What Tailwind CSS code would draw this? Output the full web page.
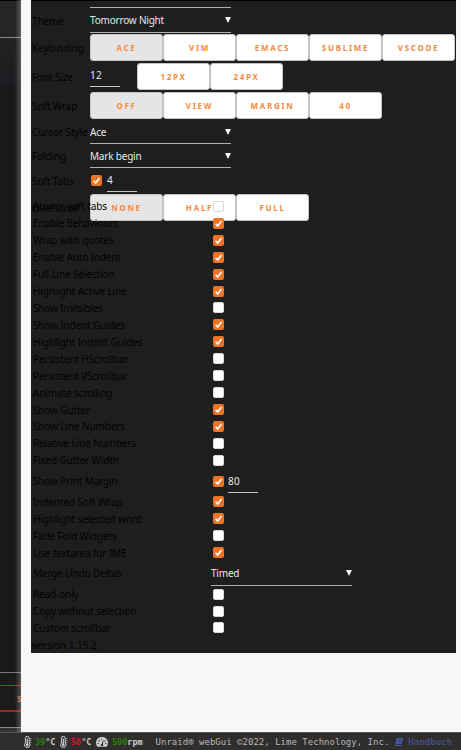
<!DOCTYPE html>
<html lang="de">
<head>
    <meta charset="UTF-8">
    <meta name="viewport" content="width=device-width, initial-scale=1.0">
    <title>Editor settings</title>
    <script src="https://cdn.jsdelivr.net/npm/@tailwindcss/browser@4"></script>
</head>
<body class="h-[750px] w-[461px] overflow-hidden bg-[#f7f7f7] font-['Noto_Sans',sans-serif] text-[10px] leading-none text-black">

    <svg class="hidden">
        <symbol id="check" viewBox="0 0 11 11">
            <path d="M2.6 5.8 4.7 8 8.5 2.9" fill="none" stroke="#fff" stroke-width="1.6"/>
        </symbol>
        <symbol id="thermo" viewBox="0 0 8 12">
            <path d="M1.4 7V2.2a1.9 1.9 0 0 1 3.8 0V7a2.7 2.7 0 1 1-3.8 0z" fill="none" stroke="#d0d0d0" stroke-width="1"/>
            <path d="M3.3 2.5v6" stroke="#d0d0d0" stroke-width="1.2"/>
            <circle cx="3.3" cy="9" r="1.4" fill="#d0d0d0"/>
            <path d="M6 2.5h1.5M6 4.5h1.5M6 6.5h1.5" stroke="#aaa" stroke-width=".8"/>
        </symbol>
    </svg>

    <div class="flex h-[732px]">
        <!-- Page behind the panel -->
        <div class="relative flex w-[21px] shrink-0 flex-col overflow-hidden bg-[#191a1c]">
            <div class="h-[37px] shrink-0 border-t border-black bg-[#252525]"></div>
            <div class="h-px shrink-0 bg-[#8a8a8a]"></div>
            <div class="h-[47px] shrink-0 bg-linear-to-b from-[#222] to-[#1c1d21]"></div>
            <div class="h-[587px] shrink-0"></div>
            <div class="h-px shrink-0 bg-[#777]"></div>
            <div class="h-3 shrink-0 bg-[#1c1b1b]"></div>
            <div class="h-px shrink-0 bg-[#c02828]"></div>
            <div class="h-6 shrink-0 bg-[#1c1b1b] pt-[9px] pl-[17px] text-[8px] font-bold text-[#b96a35]">S</div>
            <div class="h-[2px] shrink-0 bg-[#a32020]"></div>
            <div class="h-[15px] shrink-0 bg-[#1c1b1b]"></div>
            <div class="h-px shrink-0 bg-[#888]"></div>
            <div class="h-1 shrink-0 bg-[#333]"></div>
            <div class="absolute inset-y-0 right-0 w-[6px] bg-linear-to-r from-white/0 to-white/25"></div>
        </div>

        <div class="grow pl-[10px]">
            <div class="h-[653px] w-[425px] border-t border-black bg-[#1e1e1e] text-[#020202]">
                <div class="ml-[59px] h-[7px] w-[141px] border-b border-[#b0b0b0]"></div>
                <div id="top-rows"></div>
                <div id="list" class="relative -mt-[24px] pl-[2px]"></div>
                <div class="pt-1 pl-px tracking-[-.05px]">version 1.15.2</div>
            </div>
        </div>
    </div>

    <!-- Footer -->
    <div class="flex h-[18px] items-center border-t border-[#555] bg-[#2f2e2d] pt-px pl-6 font-['DejaVu_Sans_Mono',monospace] text-[9px] whitespace-nowrap text-[#b8b8b8]">
        <svg class="h-3 w-2"><use href="#thermo"/></svg>
        <span class="ml-[3px] w-[25px] text-[8.5px] font-bold text-[#ccc]"><span class="text-[#2d7d12]">39</span>°C</span>
        <svg class="h-3 w-2"><use href="#thermo"/></svg>
        <span class="ml-[3px] w-[25px] text-[8.5px] font-bold text-[#ccc]"><span class="text-[#e00a30]">56</span>°C</span>
        <svg class="h-[11px] w-3" viewBox="0 0 12 11">
            <path d="M1.4 9.8A6 6 0 1 1 10.6 9.8z" fill="#d0d0d0"/>
            <path d="M6 8 7.3 3.5" stroke="#2f2e2d" stroke-width="1"/>
            <g fill="#2f2e2d"><circle cx="6" cy="8" r="1.3"/><circle cx="2.2" cy="6.5" r=".7"/><circle cx="3.3" cy="3.7" r=".7"/><circle cx="5.5" cy="2.2" r=".6"/><circle cx="9" cy="4" r=".7"/><circle cx="9.8" cy="6.5" r=".7"/></g>
        </svg>
        <span class="ml-1 w-[43.5px] text-[8.5px] font-bold text-[#ccc]"><span class="text-[#2d7d12]">500</span>rpm</span>
        <span class="tracking-[.02px]">Unraid® webGui ©2022, Lime Technology, Inc.</span>
        <svg class="ml-[6px] h-2 w-2" viewBox="0 0 8 8">
            <path d="M2 0H8L6.8 5.8H1.4V7h5.4V8H1Q0 8 0 6.6z" fill="#4a5da8"/>
            <path d="M3.3 1.8h3M3 3.1h3" stroke="#2f2e2d" stroke-width=".6"/>
        </svg>
        <span class="ml-[5px] tracking-[.08px] text-[#4a5da8]">Handbuch</span>
    </div>

    <script>
        const select = (text) => `
            <div class="flex h-full w-[141px] items-center justify-between border-b border-[#b0b0b0] text-[#e8e8e8]">
                <span class="tracking-[-.2px]">${text}</span>
                <svg class="h-[6px] w-[6px]" viewBox="0 0 6 6"><path d="M0 0h6L3 6z" fill="#f2f2f2"/></svg>
            </div>`;

        const input = (text) => `
            <div class="flex h-[24px] w-[30px] items-center self-start border-b border-[#c8c8c8] pt-px tracking-[.3px] text-[#e8e8e8]">${text}</div>`;

        const check = (on) => on
            ? '<svg class="h-[11px] w-[11px] shrink-0 rounded-[2px] bg-[#ec7422]"><use href="#check"/></svg>'
            : '<span class="h-[11px] w-[11px] shrink-0 rounded-[2px] border border-[#d8d8d8] bg-white"></span>';

        const buttons = (names, active) => names.map((name, i) => `
            <button class="h-[27px] w-[73px] shrink-0 rounded-[3px] border border-[#c4c4c4] text-[8px] font-bold tracking-[1.7px] text-[#f58a3c] ${i === active ? 'bg-[#e5e5e5]' : 'bg-white'}">${name}</button>`).join('');

        const topRow = (height, label, content) => `
            <div class="flex ${height} items-center">
                <span class="w-[59px] shrink-0 pl-px tracking-[-.1px] whitespace-nowrap">${label}</span>${content}
            </div>`;

        document.getElementById('top-rows').innerHTML = [
            topRow('h-[25px]', 'Theme', select('Tomorrow Night')),
            topRow('h-[29px]', 'Keybinding', buttons(['ACE', 'VIM', 'EMACS', 'SUBLIME', 'VSCODE'], 0)),
            topRow('h-[29px]', 'Font Size', '<span class="flex h-[27px] w-[47px]">' + input('12') + '</span>' + buttons(['12PX', '24PX'], -1)),
            topRow('h-[29px]', 'Soft Wrap', buttons(['OFF', 'VIEW', 'MARGIN', '40'], 0)),
            topRow('h-[24px]', 'Cursor Style', select('Ace')),
            topRow('h-[24px]', 'Folding', select('Mark begin')),
            topRow('h-[25px]', 'Soft Tabs', '<span class="w-px"></span>' + check(true) + '<span class="w-[5px]"></span>' + input('4')),
            topRow('h-[29px]', 'Overscroll', buttons(['NONE', 'HALF', 'FULL'], 0)),
        ].join('');

        const options = [
            ['Atomic soft tabs', false],
            ['Enable Behaviours', true],
            ['Wrap with quotes', true],
            ['Enable Auto Indent', true],
            ['Full Line Selection', true],
            ['Highlight Active Line', true],
            ['Show Invisibles', false],
            ['Show Indent Guides', true],
            ['Highlight Indent Guides', true],
            ['Persistent HScrollbar', false],
            ['Persistent VScrollbar', false],
            ['Animate scrolling', false],
            ['Show Gutter', true],
            ['Show Line Numbers', true],
            ['Relative Line Numbers', false],
            ['Fixed Gutter Width', false],
            ['Show Print Margin', true, '80'],
            ['Indented Soft Wrap', true],
            ['Highlight selected word', true],
            ['Fade Fold Widgets', false],
            ['Use textarea for IME', true],
            ['Merge Undo Deltas', null],
            ['Read-only', false],
            ['Copy without selection', false],
            ['Custom scrollbar', false],
        ];

        document.getElementById('list').innerHTML = options.map(([label, on, value]) => `
            <div class="flex items-center ${value || on === null ? 'h-[24.6px]' : 'h-[16.93px]'}">
                <span class="w-[178px] shrink-0 tracking-[-.13px] whitespace-nowrap">${label}</span>
                ${on === null ? select('Timed') : '<span class="w-[1.5px]"></span>' + check(on)}
                ${value ? '<span class="w-[4.5px]"></span>' + input(value) : ''}
            </div>`).join('');
    </script>
</body>
</html>
